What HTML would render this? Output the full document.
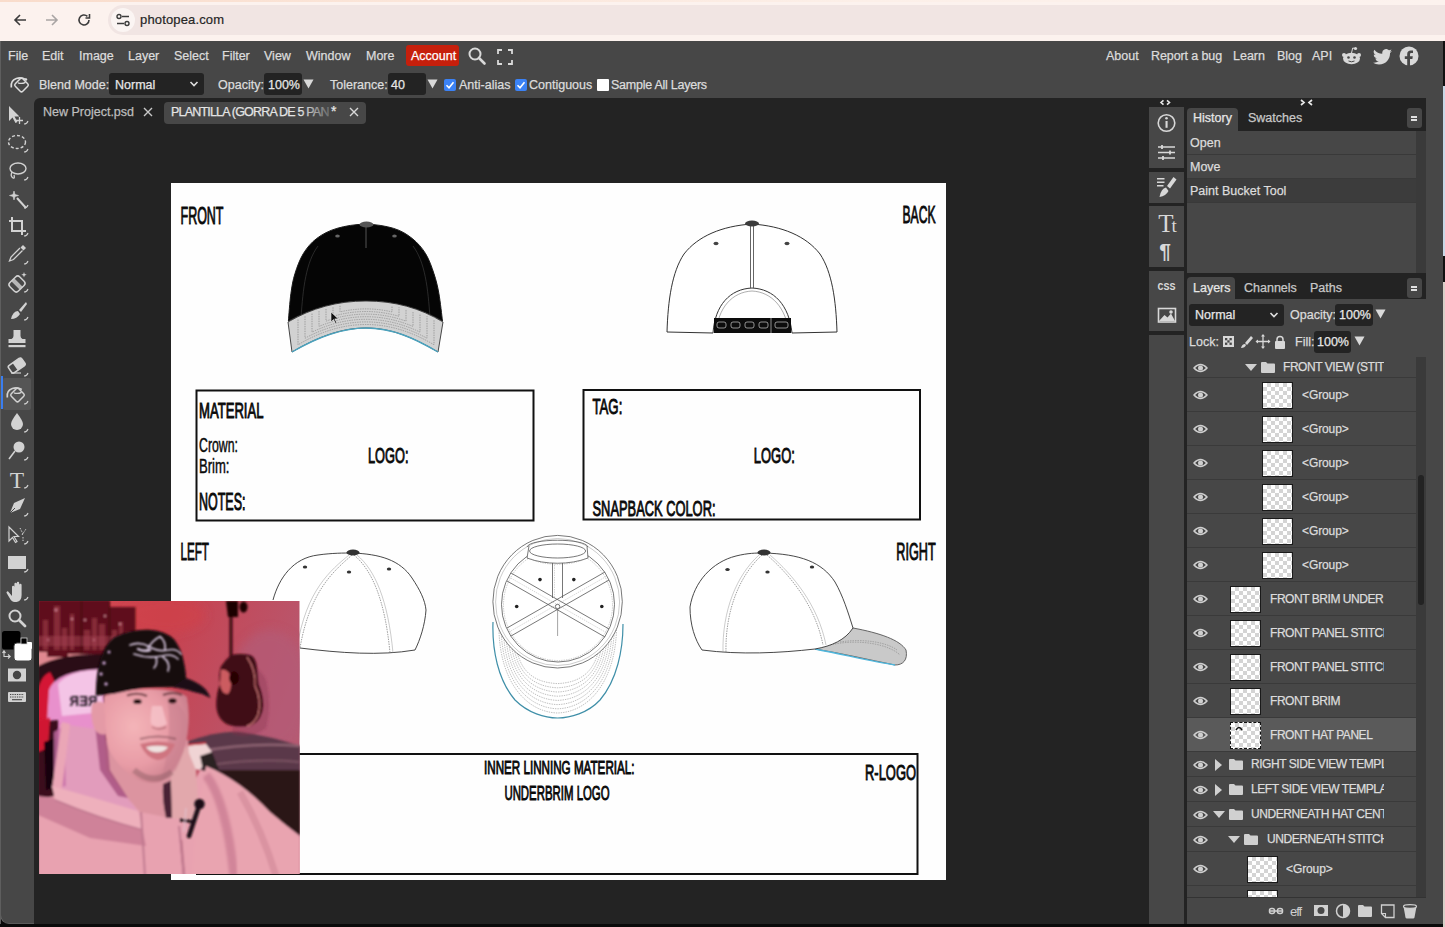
<!DOCTYPE html>
<html><head><meta charset="utf-8">
<style>
*{margin:0;padding:0;box-sizing:border-box}
html,body{width:1445px;height:927px;overflow:hidden;background:#0a0a0a;font-family:"Liberation Sans",sans-serif;}
.a{position:absolute}
.t{position:absolute;white-space:nowrap;color:#dcdcdc;font-size:12.5px;line-height:14px;-webkit-text-stroke:0.25px currentColor}
#chrome{left:0;top:0;width:1445px;height:41px;background:#fcf2ee}
#menubar{left:0;top:41px;width:1445px;height:29px;background:#474747}
#optbar{left:0;top:70px;width:1445px;height:28px;background:#474747}
#toolbar{left:0;top:98px;width:34px;height:826px;background:#474747;border-radius:0 0 0 9px;border-left:1px solid #6a6a6a;border-bottom:1px solid #5a5a5a}
#docarea{left:34px;top:98px;width:1114px;height:826px;background:#232323}
#rpanel{left:1148px;top:98px;width:295px;height:826px;background:#232323}
.sel{position:absolute;background:#232323;border-radius:3px}
.cb{position:absolute;width:12px;height:12px;border-radius:2px;background:#3b82f6}
.cbw{position:absolute;width:12px;height:12px;border-radius:1px;background:#fff}
</style></head><body>
<!-- browser chrome -->
<div id="chrome" class="a"></div>
<div class="a" style="left:0;top:0;width:1445px;height:2px;background:linear-gradient(90deg,#f9dccb,#fbe6da 30%,#fcefe8 60%,#fcf2ee)"></div>
<div class="a" style="left:108px;top:5px;width:1337px;height:30px;border-radius:15px 0 0 15px;background:#f1e5e3"></div>
<div class="a" style="left:111px;top:8px;width:24px;height:24px;border-radius:12px;background:#fbf5f3"></div>
<div class="t" style="left:140px;top:13px;color:#262626;font-size:13px;letter-spacing:.15px;-webkit-text-stroke:0.2px #262626">photopea.com</div>

<div id="menubar" class="a"></div>
<div id="optbar" class="a"></div>
<div id="toolbar" class="a"></div>
<div id="docarea" class="a"></div>
<div id="rpanel" class="a"></div>

<!-- browser nav icons -->
<svg class="a" style="left:12px;top:12px" width="16" height="16" viewBox="0 0 16 16"><path d="M14 8H3M8 3L3 8l5 5" fill="none" stroke="#3c3c3c" stroke-width="1.6"/></svg>
<svg class="a" style="left:44px;top:12px" width="16" height="16" viewBox="0 0 16 16"><path d="M2 8h11M8 3l5 5-5 5" fill="none" stroke="#a9a5a4" stroke-width="1.6"/></svg>
<svg class="a" style="left:76px;top:12px" width="16" height="16" viewBox="0 0 16 16"><path d="M13 8a5 5 0 1 1-1.6-3.7" fill="none" stroke="#3c3c3c" stroke-width="1.6"/><path d="M13.5 2v4h-4" fill="none" stroke="#3c3c3c" stroke-width="1.6"/></svg>
<svg class="a" style="left:115px;top:13px" width="16" height="14" viewBox="0 0 16 14"><circle cx="4" cy="3.5" r="2" fill="none" stroke="#3c3c3c" stroke-width="1.4"/><path d="M7 3.5h7M2 10.5h7" stroke="#3c3c3c" stroke-width="1.4"/><circle cx="12" cy="10.5" r="2" fill="none" stroke="#3c3c3c" stroke-width="1.4"/></svg>

<!-- menu -->
<div class="t" style="left:8px;top:49px">File</div>
<div class="t" style="left:42px;top:49px">Edit</div>
<div class="t" style="left:79px;top:49px">Image</div>
<div class="t" style="left:128px;top:49px">Layer</div>
<div class="t" style="left:174px;top:49px">Select</div>
<div class="t" style="left:222px;top:49px">Filter</div>
<div class="t" style="left:264px;top:49px">View</div>
<div class="t" style="left:306px;top:49px">Window</div>
<div class="t" style="left:366px;top:49px">More</div>
<div class="a" style="left:406px;top:45px;width:53px;height:21px;border-radius:3px;background:#c61f0c"></div>
<div class="t" style="left:411px;top:49px;color:#fff">Account</div>
<svg class="a" style="left:467px;top:46px" width="20" height="20" viewBox="0 0 20 20"><circle cx="8" cy="8" r="5.5" fill="none" stroke="#d9d9d9" stroke-width="2"/><path d="M12 12l5.5 5.5" stroke="#d9d9d9" stroke-width="2.6" stroke-linecap="round"/></svg>
<svg class="a" style="left:497px;top:49px" width="16" height="16" viewBox="0 0 16 16"><path d="M1 5V1h4M11 1h4v4M15 11v4h-4M5 15H1v-4" fill="none" stroke="#d9d9d9" stroke-width="1.8"/></svg>
<div class="t" style="left:1106px;top:49px">About</div>
<div class="t" style="left:1151px;top:49px;letter-spacing:-.1px">Report a bug</div>
<div class="t" style="left:1233px;top:49px">Learn</div>
<div class="t" style="left:1277px;top:49px">Blog</div>
<div class="t" style="left:1312px;top:49px">API</div>
<svg class="a" style="left:1341px;top:46px" width="21" height="20" viewBox="0 0 21 20"><ellipse cx="10.5" cy="12.5" rx="8.5" ry="5.8" fill="#d9d9d9"/><circle cx="3" cy="9" r="2" fill="#d9d9d9"/><circle cx="18" cy="9" r="2" fill="#d9d9d9"/><circle cx="14.5" cy="2.5" r="1.6" fill="#d9d9d9"/><path d="M10.5 7l1.2-5 3 .6" fill="none" stroke="#d9d9d9" stroke-width="1"/><circle cx="7.5" cy="11.5" r="1.3" fill="#474747"/><circle cx="13.5" cy="11.5" r="1.3" fill="#474747"/><path d="M7.5 15q3 1.6 6 0" fill="none" stroke="#474747" stroke-width="1"/></svg>
<svg class="a" style="left:1373px;top:49px" width="19" height="16" viewBox="0 0 24 20"><path d="M24 2.4a10 10 0 0 1-2.8.8A5 5 0 0 0 23.3.4a10 10 0 0 1-3.1 1.2A4.9 4.9 0 0 0 11.8 6 14 14 0 0 1 1.7.9a4.9 4.9 0 0 0 1.5 6.6A4.9 4.9 0 0 1 1 6.9a4.9 4.9 0 0 0 3.9 4.8 5 5 0 0 1-2.2.1 4.9 4.9 0 0 0 4.6 3.4A9.9 9.9 0 0 1 0 17.3 14 14 0 0 0 7.5 19.5c9.1 0 14-7.500 14-14v-.6A10 10 0 0 0 24 2.4z" fill="#d9d9d9"/></svg>
<svg class="a" style="left:1399px;top:46px" width="20" height="20" viewBox="0 0 20 20"><circle cx="10" cy="10" r="9.5" fill="#d9d9d9"/><path d="M11 20v-7h2.4l.4-2.8H11V8.5c0-.8.3-1.4 1.4-1.4H14V4.6a19 19 0 0 0-2.2-.1c-2.2 0-3.6 1.300-3.600 3.700v2H5.800V13h2.400v7z" fill="#474747"/></svg>

<!-- options bar -->
<svg class="a" style="left:0;top:70px" width="34" height="28" viewBox="0 70 34 28"><rect x="16.200" y="79.700" width="10.600" height="10.600" rx="1.800" transform="rotate(45 21.500 85)" fill="none" stroke="#dcdcdc" stroke-width="1.500"/><path d="M18 82.800q3.500 1.500 7.500-.5" fill="none" stroke="#dcdcdc" stroke-width="1.300"/><path d="M11.300 87.500q-1-7 5-9q5-1.500 9.500 1" fill="none" stroke="#dcdcdc" stroke-width="1.700"/><circle cx="26" cy="79.500" r="1.200" fill="#dcdcdc"/></svg>
<div class="t" style="left:39px;top:78px">Blend Mode:</div>
<div class="sel" style="left:109px;top:73px;width:95px;height:22px"></div>
<div class="t" style="left:115px;top:78px;color:#e6e6e6">Normal</div>
<svg class="a" style="left:189px;top:80px" width="10" height="8" viewBox="0 0 10 8"><path d="M1.5 2l3.5 3.5L8.5 2" fill="none" stroke="#ddd" stroke-width="1.6"/></svg>
<div class="t" style="left:218px;top:78px">Opacity:</div>
<div class="sel" style="left:264px;top:73px;width:38px;height:22px"></div>
<div class="t" style="left:268px;top:78px;color:#e6e6e6">100%</div>
<svg class="a" style="left:303px;top:79px" width="11" height="10" viewBox="0 0 11 10"><path d="M0.5 0.5h10L5.5 9.500z" fill="#d9d9d9"/></svg>
<div class="t" style="left:330px;top:78px">Tolerance:</div>
<div class="sel" style="left:388px;top:73px;width:38px;height:22px"></div>
<div class="t" style="left:391px;top:78px;color:#e6e6e6">40</div>
<svg class="a" style="left:427px;top:79px" width="11" height="10" viewBox="0 0 11 10"><path d="M0.5 0.5h10L5.5 9.500z" fill="#d9d9d9"/></svg>
<div class="cb" style="left:444px;top:79px"></div>
<svg class="a" style="left:444px;top:79px" width="12" height="12" viewBox="0 0 12 12"><path d="M2.5 6.200l2.500 2.500L9.500 3.200" fill="none" stroke="#fff" stroke-width="1.6"/></svg>
<div class="t" style="left:459px;top:78px">Anti-alias</div>
<div class="cb" style="left:515px;top:79px"></div>
<svg class="a" style="left:515px;top:79px" width="12" height="12" viewBox="0 0 12 12"><path d="M2.5 6.200l2.500 2.500L9.500 3.200" fill="none" stroke="#fff" stroke-width="1.6"/></svg>
<div class="t" style="left:529px;top:78px">Contiguous</div>
<div class="cbw" style="left:597px;top:79px"></div>
<div class="t" style="left:611px;top:78px;letter-spacing:-.25px">Sample All Layers</div>


<!-- left toolbar -->
<div class="a" style="left:34px;top:98px;width:8px;height:8px;background:#474747"></div>
<div class="a" style="left:34px;top:98px;width:8px;height:8px;background:#232323;border-radius:6px 0 0 0"></div>
<div class="a" style="left:3px;top:378px;width:28px;height:32px;background:#555555;border-radius:2px"></div>
<div class="a" style="left:0;top:376px;width:3px;height:33px;background:#3a7ef0"></div>
<svg class="a" style="left:0;top:98px" width="34" height="620" viewBox="0 98 34 620">
<g fill="#d2d2d2" stroke="#d2d2d2">
<!-- corner marks -->
<g fill="none" stroke-width="1.1" stroke="#cfcfcf">
<path d="M24 124q3 0 4-3"/><path d="M24 152q3 0 4-3"/><path d="M24 180q3 0 4-3"/><path d="M24 208q3 0 4-3"/><path d="M24 236q3 0 4-3"/><path d="M24 264q3 0 4-3"/><path d="M24 292q3 0 4-3"/><path d="M24 320q3 0 4-3"/><path d="M24 376q3 0 4-3"/><path d="M24 404q3 0 4-3"/><path d="M24 432q3 0 4-3"/><path d="M24 460q3 0 4-3"/><path d="M24 488q3 0 4-3"/><path d="M24 516q3 0 4-3"/><path d="M24 544q3 0 4-3"/><path d="M24 572q3 0 4-3"/><path d="M24 600q3 0 4-3"/>
</g>
<!-- move -->
<path d="M9 106l0 15 3.5-3.5 3 5.500 2-1-3-5.500 5 0z" stroke="none"/>
<path d="M19.5 117v7M16 120.5h7" fill="none" stroke-width="1.3"/>
<!-- ellipse marquee -->
<ellipse cx="17" cy="142" rx="8.5" ry="6.5" fill="none" stroke-width="1.4" stroke-dasharray="3 2"/>
<!-- lasso -->
<ellipse cx="18" cy="168.5" rx="8" ry="5.5" fill="none" stroke-width="1.4"/>
<path d="M12 172q-2 4 1 6q2 1 1-3" fill="none" stroke-width="1.3"/>
<!-- wand -->
<path d="M17 198l9 10" fill="none" stroke-width="2"/>
<path d="M14 191l1 3.500 3.500 1-3.500 1-1 3.500-1-3.500-3.500-1 3.500-1z" stroke-width=".6"/>
<!-- crop -->
<path d="M12 217v14h14M9 221h13v14" fill="none" stroke-width="2"/>
<!-- eyedropper -->
<path d="M23 245l3 3-2.500 2.500-3-3z" stroke="none"/>
<path d="M20 248l-9 9-1.500 4 4-1.500 9-9" fill="none" stroke-width="1.3"/>
<!-- heal -->
<g transform="rotate(45 17 284)"><rect x="11" y="277" width="12" height="14" rx="3" fill="none" stroke-width="1.5"/><rect x="11" y="282" width="12" height="4" stroke="none" opacity=".8"/></g>
<path d="M24 272l.7 2 2 .7-2 .7-.7 2-.7-2-2-.7 2-.7z" stroke="none"/>
<!-- brush -->
<path d="M26 302l-7 8 2 2 6-8z" stroke="none"/><path d="M18 311q-5 0-7 8q6 0 9-5z" stroke="none"/>
<!-- stamp -->
<path d="M13.500 330h7v6q0 2 2 3h3v4H8.500v-4h3q2-1 2-3z" stroke="none"/><rect x="8.500" y="345" width="17" height="2.200" stroke="none"/>
<!-- eraser -->
<g transform="rotate(-35 17 366)"><rect x="9" y="361" width="16" height="9" rx="2" fill="none" stroke-width="1.6"/><rect x="15" y="361" width="10" height="9" rx="1" stroke="none"/></g>
<path d="M11 373h10" fill="none" stroke-width="1.2"/>
<!-- bucket -->
<g fill="none"><rect x="12.200" y="389.700" width="10.600" height="10.600" rx="1.800" transform="rotate(45 17.500 395)" stroke-width="1.500"/><path d="M14 392.800q3.500 1.500 7.500-.5" stroke-width="1.300"/><path d="M7.300 397.500q-1-7 5-9q5-1.500 9.500 1" stroke-width="1.700"/></g>
<!-- drop -->
<path d="M17 413q-6 8-6 11a6 6 0 0 0 12 0q0-3-6-11z" stroke="none"/>
<!-- dodge -->
<circle cx="19" cy="447" r="5.5" stroke="none"/><path d="M15 451l-6 8" fill="none" stroke-width="1.5"/>
</g>
<text x="17" y="487.5" text-anchor="middle" font-family="Liberation Serif" font-size="23.5" fill="#d2d2d2">T</text>
<g fill="#d2d2d2" stroke="#d2d2d2">
<!-- pen -->
<path d="M25 498l-11 5-4 10 10-4 5-11z" stroke="none"/><path d="M10 513l5-5" stroke="#474747" stroke-width="1"/>
<!-- path select -->
<path d="M9 527v14l3.500-3.500 3 5 1.500-1-3-5h4.500z" fill="none" stroke-width="1.2"/>
<path d="M20 528l3 6M22 535l4-6M23 537v4" fill="none" stroke-width="1" stroke-dasharray="1.500 1.200"/>
<!-- rect -->
<rect x="8" y="556" width="18" height="13" stroke="none"/>
<!-- hand -->
<path d="M12 596v-9a1.200 1.200 0 0 1 2.400 0v5v-8a1.200 1.200 0 0 1 2.400 0v8v-9a1.200 1.200 0 0 1 2.400 0v9v-7a1.200 1.200 0 0 1 2.400 0v10q0 6-5 7h-2q-3 0-5-4l-3-5a1.100 1.100 0 0 1 2-1z" stroke="none"/>
<!-- zoom -->
<circle cx="15" cy="616" r="5.5" fill="none" stroke-width="2"/><path d="M19 620l6 6" fill="none" stroke-width="2.8" stroke-linecap="round"/>
</g>
<!-- colors -->
<rect x="2" y="631" width="18.500" height="18.500" rx="2.500" fill="#000"/>
<rect x="14" y="643" width="18" height="18" rx="3" fill="#fff" stroke="#474747" stroke-width="1"/>
<rect x="25" y="642" width="7" height="7" rx="1" fill="#fff"/>
<rect x="21" y="638" width="6" height="6" fill="#000" stroke="#d2d2d2" stroke-width=".8"/>
<path d="M4 651v5.500h6M8 654.500l2.200 2-2.200 2M2.500 653l1.500-2.200 1.500 2.200" fill="none" stroke="#d2d2d2" stroke-width="1.100"/>
<!-- quick mask -->
<rect x="8" y="668.500" width="18" height="13" fill="#d2d2d2"/><circle cx="17" cy="675" r="4.200" fill="#474747"/>
<!-- keyboard -->
<rect x="8" y="692" width="18" height="10" rx="1" fill="#d2d2d2"/>
<path d="M10 694.500h14M10 697h14" stroke="#474747" stroke-width="1.100" stroke-dasharray="1.300 1"/><path d="M12 699.700h10" stroke="#474747" stroke-width="1.100"/>
</svg>


<!-- document -->
<svg class="a" style="left:0;top:0" width="1445" height="927" viewBox="0 0 1445 927">
<defs>
<filter id="soft" x="-5%" y="-5%" width="110%" height="110%"><feGaussianBlur stdDeviation="0.35"/></filter>
</defs>
<rect x="171" y="183" width="775" height="697" fill="#fefefe"/>
<g font-family="Liberation Sans" font-weight="normal" fill="#0a0a0a" stroke="#0a0a0a" stroke-width="0.95">
<text x="180.5" y="223.5" font-size="24.2" textLength="43" lengthAdjust="spacingAndGlyphs">FRONT</text>
<text x="902.5" y="223.2" font-size="24.2" textLength="33" lengthAdjust="spacingAndGlyphs">BACK</text>
<text x="199" y="418" font-size="22" textLength="64.5" lengthAdjust="spacingAndGlyphs">MATERIAL</text>
<text x="199" y="452" font-size="19.5" font-weight="normal" stroke-width="0.45" textLength="39" lengthAdjust="spacingAndGlyphs">Crown:</text>
<text x="199" y="473.3" font-size="19.5" font-weight="normal" stroke-width="0.45" textLength="30.5" lengthAdjust="spacingAndGlyphs">Brim:</text>
<text x="368" y="463" font-size="22" textLength="40.5" lengthAdjust="spacingAndGlyphs">LOGO:</text>
<text x="199" y="509.5" font-size="23" textLength="46.5" lengthAdjust="spacingAndGlyphs">NOTES:</text>
<text x="592.5" y="413.8" font-size="22.5" textLength="29.8" lengthAdjust="spacingAndGlyphs">TAG:</text>
<text x="753.8" y="463" font-size="22" textLength="41" lengthAdjust="spacingAndGlyphs">LOGO:</text>
<text x="592.5" y="515.6" font-size="22" textLength="123" lengthAdjust="spacingAndGlyphs">SNAPBACK COLOR:</text>
<text x="180.5" y="559.6" font-size="23.5" textLength="28.5" lengthAdjust="spacingAndGlyphs">LEFT</text>
<text x="896.3" y="559.6" font-size="23.5" textLength="39.3" lengthAdjust="spacingAndGlyphs">RIGHT</text>
<text x="484" y="774.3" font-size="19" textLength="150.5" lengthAdjust="spacingAndGlyphs">INNER LINNING MATERIAL:</text>
<text x="504.4" y="800.3" font-size="20" textLength="105.2" lengthAdjust="spacingAndGlyphs">UNDERBRIM LOGO</text>
<text x="865" y="779.8" font-size="22" textLength="51" lengthAdjust="spacingAndGlyphs">R-LOGO</text>
</g>
<g fill="none" stroke="#111" stroke-width="2">
<rect x="196.5" y="390.5" width="337" height="130"/>
<rect x="583.5" y="390" width="336.5" height="129.5"/>
<rect x="197" y="754" width="720.5" height="120"/>
</g>

<!-- FRONT hat -->
<g>
<path d="M288.4 321.0 C288.8 316.4 289.8 301.5 290.9 293.6 C292.0 285.7 292.9 280.2 295.0 273.5 C297.1 266.8 299.8 259.4 303.4 253.5 C307.0 247.7 311.2 242.6 316.8 238.4 C322.4 234.2 328.8 230.8 336.9 228.4 C345.0 226.0 355.8 224.2 365.3 224.2 C374.8 224.2 385.9 226.0 393.7 228.4 C401.5 230.8 406.8 234.2 412.1 238.4 C417.4 242.6 421.9 247.7 425.5 253.5 C429.1 259.4 431.7 266.8 433.9 273.5 C436.1 280.2 437.5 285.7 438.9 293.6 C440.3 301.5 441.9 316.4 442.5 321.0 C420 308 395 301 366 301 C337 301 312 308 288.4 321Z" fill="#050505" stroke="#1a1a1a" stroke-width="1"/>
<path d="M301 318 C303 288 306 262 318 246" fill="none" stroke="#3a3a3a" stroke-width=".7"/>
<path d="M430 318 C428 288 425 262 413 246" fill="none" stroke="#3a3a3a" stroke-width=".7"/>
<path d="M366 227 V248" stroke="#555" stroke-width="1"/>
<ellipse cx="366.5" cy="224.5" rx="7" ry="3" fill="#555"/>
<ellipse cx="337.5" cy="236" rx="2.3" ry="1.6" fill="#666"/>
<ellipse cx="394.5" cy="236" rx="2.3" ry="1.6" fill="#666"/>
<path d="M288 322 C312 308 337 301 366 301 C395 301 420 308 443 322 L438 352 C414 338 392 328 366 328 C340 328 316 338 292 352Z" fill="#d2d2d2" stroke="#333" stroke-width=".9"/>
<path d="M292 352 C316 338 340 328 366 328 C392 328 414 338 438 352" fill="none" stroke="#4aa3bf" stroke-width="1.4"/>
<g fill="none" stroke="#7a7a7a" stroke-width=".6" stroke-dasharray="1.4 1"><path d="M298 319.5 L298 344.8 Q366 304.2 434 344.8 L434 319.5"/><path d="M305 316.3 L305 338.2 Q366 305.6 427 338.2 L427 316.3"/><path d="M312 313.6 L312 332.1 Q366 306.5 420 332.1 L420 313.6"/><path d="M319 311.1 L319 326.4 Q366 307.0 413 326.4 L413 311.1"/><path d="M326 309.0 L326 321.1 Q366 307.1 406 321.1 L406 309.0"/><path d="M333 307.3 L333 316.3 Q366 306.7 399 316.3 L399 307.3"/><path d="M340 305.8 L340 311.9 Q366 305.9 392 311.9 L392 305.8"/></g>
<path d="M331 312 v10 l2.5-2.5 l2 4 l1.3-.6 l-2-4 h3.5z" fill="#111" stroke="#eee" stroke-width=".6"/>
</g>
<!-- BACK hat -->
<g fill="none" stroke="#333" stroke-width="1">
<path d="M667 332 C668 300 672 272 684 254 C698 236 722 226 752 224 C782 226 806 236 820 254 C832 272 836 300 837 332" fill="#fff"/>
<path d="M667 332 L713 333 M792 333 L837 332"/>
<path d="M713 333 C715 305 730 289 752 288 C774 289 789 305 792 333" stroke-width="1"/>
<path d="M716 333 C718 308 732 292 752 291 C772 292 786 308 789 333" stroke="#777" stroke-width=".6"/>
<path d="M750.5 226 V288 M753.5 226 V288" stroke="#555" stroke-width=".9"/>
</g>
<rect x="714" y="318" width="77" height="15" fill="#0c0c0c"/>
<g fill="none" stroke="#ccc" stroke-width=".7"><rect x="717" y="322" width="9" height="6" rx="2"/><rect x="731" y="322" width="9" height="6" rx="2"/><rect x="745" y="322" width="9" height="6" rx="2"/><rect x="759" y="322" width="9" height="6" rx="2"/><rect x="775" y="322" width="13" height="6" rx="2"/><path d="M771 318 v15"/></g>
<ellipse cx="752" cy="223.5" rx="7" ry="3" fill="#3c3c3c"/>
<ellipse cx="716" cy="243.5" rx="2.5" ry="1.7" fill="#444"/>
<ellipse cx="787" cy="243.5" rx="2.5" ry="1.7" fill="#444"/>
<!-- LEFT hat -->
<g fill="none" stroke="#333" stroke-width=".9">
<path d="M273 600 C279 578 293 558 318 555 C332 553 344 553 352 553 C380 554 400 560 412 578 C420 590 425 600 426 610 C425 625 420 640 415 650 C380 656 340 653 300 648"  fill="#fff"/>
<path d="M352 555 C335 570 310 590 300 648" stroke="#777" stroke-width=".7" stroke-dasharray="1.5 1"/>
<path d="M349 555 C331 570 306 590 297 648" stroke="#999" stroke-width=".5"/>
<path d="M354 555 C372 570 385 600 390 653" stroke="#777" stroke-width=".7" stroke-dasharray="1.5 1"/>
<path d="M357 555 C375 570 388 600 393 653" stroke="#999" stroke-width=".5"/>
</g>
<ellipse cx="353" cy="552.5" rx="6.5" ry="3" fill="#333"/>
<ellipse cx="305" cy="567" rx="2.2" ry="1.6" fill="#333"/>
<ellipse cx="349" cy="572" rx="2.2" ry="1.6" fill="#333"/>
<ellipse cx="389" cy="569" rx="2.2" ry="1.6" fill="#333"/>
<!-- UNDERNEATH hat -->
<path d="M493 622 C492 650 498 680 515 700 C528 713 545 718 557.6 718 C570 718 588 713 600 700 C617 680 623 650 623 624" fill="#fff" stroke="#3f8fa8" stroke-width="1.2"/>
<g fill="none" stroke="#8a8a8a" stroke-width=".55" stroke-dasharray="1.4 1"><path d="M499.0 630.0 C500.0 680.0 525.0 712.0 557.6 713.0 C590.0 712.0 615.0 680.0 616.5 630.0"/>
<path d="M501.3 631.3 C502.5 679.2 526.7 707.8 557.6 708.8 C588.3 707.8 612.5 679.2 614.2 631.3"/>
<path d="M503.6 632.5 C505.0 678.3 528.4 703.6 557.6 704.6 C586.6 703.6 610.0 678.3 611.9 632.5"/>
<path d="M505.9 633.8 C507.6 677.5 530.0 699.4 557.6 700.4 C585.0 699.4 607.4 677.5 609.6 633.8"/>
<path d="M508.2 635.0 C510.1 676.6 531.7 695.2 557.6 696.2 C583.3 695.2 604.9 676.6 607.3 635.0"/>
<path d="M510.6 636.3 C512.6 675.8 533.4 691.0 557.6 692.0 C581.6 691.0 602.4 675.8 605.0 636.3"/>
<path d="M512.9 637.6 C515.1 675.0 535.1 686.8 557.6 687.8 C579.9 686.8 599.9 675.0 602.6 637.6"/>
<path d="M515.2 638.8 C517.6 674.1 536.8 682.6 557.6 683.6 C578.2 682.6 597.4 674.1 600.3 638.8"/></g>
<g fill="none" stroke="#555" stroke-width=".8">
<ellipse cx="557.6" cy="601.7" rx="64.7" ry="66.3" fill="#fff"/>
<ellipse cx="557.6" cy="602" rx="62" ry="63.5" stroke="#999" stroke-width=".5"/>
<ellipse cx="558" cy="604.5" rx="56.5" ry="57.5"/>
<ellipse cx="558" cy="605" rx="54.5" ry="55.5" stroke="#999" stroke-width=".5" stroke-dasharray="1.4 1"/>
<path d="M527 547 C530 538 585 538 588 547" fill="none"/>
<path d="M529 546 L527 558 C545 565 570 565 588 558 L587 546" fill="#fff"/>
<ellipse cx="557.6" cy="551" rx="28" ry="7" fill="#fff"/>
<path d="M531 559 C545 566 570 566 585 559" stroke="#999" stroke-width=".5" stroke-dasharray="1.4 1"/>
<path d="M552.5 563 V598 M562.5 563 V598" />
<path d="M554.5 565 V598" stroke="#aaa" stroke-width=".5" stroke-dasharray="1.4 1"/>
<path d="M511 573 L609 629 M507 581 L605 637" fill="none"/>
<path d="M509 577 L607 633" stroke="#aaa" stroke-width=".5" stroke-dasharray="1.4 1"/>
<path d="M507 628 L605 572 M511 636 L609 580" fill="none"/>
<path d="M509 632 L607 576" stroke="#aaa" stroke-width=".5" stroke-dasharray="1.4 1"/>
<path d="M557.6 608 L557.6 636" stroke="#666" stroke-width=".6"/>
<circle cx="557.6" cy="606.5" r="2.2" fill="#fff"/>
</g>
<circle cx="540" cy="579.6" r="1.8" fill="#222"/><circle cx="573.8" cy="579.6" r="1.8" fill="#222"/>
<circle cx="516.7" cy="606.5" r="1.8" fill="#222"/><circle cx="601.8" cy="606.5" r="1.8" fill="#222"/>
<!-- RIGHT hat -->
<g fill="none" stroke="#333" stroke-width=".9">
<path d="M853 628 C880 633 900 640 906 650 C908 660 903 665 895 665 C870 660 840 653 815 649Z" fill="#c9c9c9" stroke="#555"/>
<path d="M815 649 C850 656 875 662 895 665" stroke="#4fb6dc" stroke-width="1.4"/>
<g stroke="#888" stroke-width=".6" stroke-dasharray="1.5 1"><path d="M830 645 C860 638 890 645 900 655"/><path d="M840 642 C865 638 888 643 897 650"/></g>
<path d="M690 607 C694 582 712 562 736 556 C748 553 756 553 764 553 C800 554 822 562 835 582 C843 596 848 612 853 628 C845 640 832 646 815 649 C780 653 740 655 702 650 C695 640 690 625 690 607Z" fill="#fff"/>
<path d="M762 555 C740 575 725 610 726 653" stroke="#777" stroke-width=".7" stroke-dasharray="1.5 1"/>
<path d="M759 555 C737 575 722 610 723 653" stroke="#999" stroke-width=".5"/>
<path d="M767 555 C790 575 815 605 823 645" stroke="#777" stroke-width=".7" stroke-dasharray="1.5 1"/>
<path d="M770 555 C793 575 818 605 826 645" stroke="#999" stroke-width=".5"/>
</g>
<ellipse cx="764" cy="552.5" rx="6.5" ry="3" fill="#333"/>
<ellipse cx="727.5" cy="569.5" rx="2.2" ry="1.6" fill="#333"/>
<ellipse cx="767.5" cy="572" rx="2.2" ry="1.6" fill="#333"/>
<ellipse cx="812" cy="567" rx="2.2" ry="1.6" fill="#333"/>

</svg>

<!-- webcam -->
<svg class="a" style="left:0;top:0" width="1445" height="927" viewBox="0 0 1445 927">
<defs>
<clipPath id="camclip"><rect x="39" y="601" width="260.5" height="273"/></clipPath>
<filter id="b1" x="-10%" y="-10%" width="120%" height="120%"><feGaussianBlur stdDeviation="1"/></filter>
<filter id="b2" x="-10%" y="-10%" width="120%" height="120%"><feGaussianBlur stdDeviation="1.3"/></filter>
<filter id="b4" x="-30%" y="-30%" width="160%" height="160%"><feGaussianBlur stdDeviation="5"/></filter>
<linearGradient id="wallg" x1="0" y1="0" x2="1" y2="0.4"><stop offset="0" stop-color="#d84a52"/><stop offset=".45" stop-color="#c8424f"/><stop offset="1" stop-color="#b65a72"/></linearGradient>
<radialGradient id="faceg" cx=".35" cy=".4" r=".75"><stop offset="0" stop-color="#f4b4b8"/><stop offset=".55" stop-color="#e89ca6"/><stop offset="1" stop-color="#c47a88"/></radialGradient>
<linearGradient id="hoodg" x1="0" y1="0" x2="0.6" y2="1"><stop offset="0" stop-color="#e49aac"/><stop offset="1" stop-color="#eaa6b0"/></linearGradient>
</defs>

<g clip-path="url(#camclip)">
<rect x="38" y="600" width="263" height="276" fill="url(#wallg)"/>
<g filter="url(#b4)">
<ellipse cx="270" cy="690" rx="40" ry="60" fill="#b45c78" opacity=".7"/>
<ellipse cx="165" cy="615" rx="40" ry="18" fill="#d04048" opacity=".6"/>
</g>
<g filter="url(#b2)">
<!-- poster -->
<path d="M38 600 H109.500 V607 H135.500 V649 H109.500 V654 H68 V657 H47 V652 H38Z" fill="#5e0f1b"/>
<g fill="#a84050" opacity=".55">
<rect x="43" y="620" width="5" height="30"/><rect x="54" y="606" width="6" height="44"/><rect x="62" y="628" width="5" height="22"/><rect x="70" y="614" width="4" height="36"/>
<rect x="84" y="630" width="6" height="20"/><rect x="92" y="618" width="5" height="32"/><rect x="99" y="624" width="6" height="26"/>
<rect x="112" y="630" width="5" height="18"/><rect x="119" y="622" width="4" height="26"/><rect x="126" y="632" width="6" height="16"/>
</g>
<g fill="#e8a0b0" opacity=".7"><circle cx="56" cy="610" r="1.500"/><circle cx="72" cy="619" r="1.200"/><circle cx="85" cy="620" r="1.300"/><circle cx="105" cy="616" r="1.200"/><circle cx="120" cy="624" r="1.200"/><circle cx="48" cy="640" r="1.400"/><circle cx="94" cy="640" r="1.300"/></g>
<rect x="38" y="636" width="97" height="10" fill="#a04050" opacity=".55"/>
<path d="M81.500 601 V654 M109.500 601 V654" stroke="#3a0610" stroke-width="1"/>
<!-- wall band -->
<path d="M38 652 H47 V657 H68 V654 H104 V668 H38Z" fill="#e08890"/>
<!-- chair -->
<path d="M38 666 Q62 653 104 654 L106 700 L106 876 H38Z" fill="#2c0c14"/>
<path d="M38 690 Q41 676 50 672 L54 680 L48 790 L38 800Z" fill="#d41634"/>
<path d="M49 690 Q56 671 100 669 L104 700 L104 770 L60 790 L48 795 Q45 740 49 690Z" fill="#e890cc"/>
<path d="M58 684 Q70 670 100 670 L103 712 L62 716Z" fill="#f4c4e6"/>
<path d="M48 730 L60 722 L62 760 L48 770Z" fill="#d060b0" opacity=".8"/>
</g>
<g filter="url(#b1)">
<text x="0" y="0" font-family="Liberation Sans" font-weight="bold" font-size="14" fill="#231420" transform="translate(97.5 705.5) scale(-1 1)" textLength="28" lengthAdjust="spacingAndGlyphs">RER</text>
</g>
<g filter="url(#b2)">
<!-- blanket and dark bottom right -->
<path d="M186 742 Q220 730 240 732 Q270 736 300 746 V772 L220 776 L200 770Z" fill="#5a3848"/>
<path d="M198 752 Q250 742 299 746" stroke="#8a6070" stroke-width="2.5" fill="none"/>
<path d="M210 765 Q260 758 299 762" stroke="#7a5262" stroke-width="2" fill="none"/>
<path d="M214 770 H300 V876 H240Z" fill="#2a1416"/>
<!-- chair piece right -->
<path d="M184 746 L206 744 L212 752 L200 770 L186 768Z" fill="#f0d4d4"/>
<path d="M186 745 L206 743" stroke="#e03040" stroke-width="1.500"/>
<path d="M200 756 L212 752 L220 772 L204 774Z" fill="#2a2024"/>
<!-- guitar -->
<path d="M236 668 Q256 660 266 680 Q272 705 266 728 Q250 740 232 734Z" fill="#8a3050" opacity=".35"/>
<path d="M231 601 V658" stroke="#3a0a10" stroke-width="3"/>
<path d="M226 601 H238 V617 H228Z" fill="#1c0406"/>
<ellipse cx="243.500" cy="607" rx="4" ry="5.500" fill="#1c0406"/>
<path d="M231 655 Q240 653 250 655 Q256 657 257 668 Q258 680 258.600 684.600 Q263 694 263.200 705.700 Q262 720 252 725 Q240 728 229 725 Q217 720 216.300 705.700 Q216 694 220 684 Q218 676 220.900 666.500 Q225 660 231 655Z" fill="#400912"/>
<path d="M247 657 Q256 670 255 686 Q262 700 258 715 Q254 724 247 726" stroke="#d88080" stroke-width="1.100" fill="none"/>
<path d="M221 670 Q226 668 231 676 Q232 690 228 694 Q221 694 220 684Z" fill="#cc5c60"/>
<ellipse cx="234" cy="678" rx="5" ry="6.500" fill="#260406"/>
<!-- hoodie base -->
<path d="M38 790 L60 788 L150 805 L186 800 L200 770 Q225 775 250 800 Q280 820 300 836 V876 H38Z" fill="#e8a2b0"/>
<!-- chair dark lower left -->
<path d="M38 722 L58 720 L58 795 L38 800Z" fill="#3a0c1c"/>
<path d="M38 720 L50 718 L48 748 L38 752Z" fill="#d01832"/>
<path d="M44 742 L56 738 L57 787 L46 790Z" fill="#140408"/>
<!-- neck -->
<path d="M100 740 L188 740 L190 790 L170 818 L140 812 L104 772Z" fill="#dc94a0"/>
<path d="M163 784 L172 780 L173 818 L166 818 Q162 800 163 784Z" fill="#4a2434"/>
<!-- hood interior left -->
<path d="M60 724 L104 730 L106 770 L128 798 L140 814 L54 788Z" fill="#e29cbc"/>
<path d="M94 716 L106 724 L110 770 L128 798 L118 796 L100 770Z" fill="#a04878" opacity=".75"/>
<path d="M54 732 L64 726 L66 786 L54 788Z" fill="#c870a8" opacity=".8"/>
<!-- hood outer rim -->
<path d="M62 722 L70 724 L62 788 L52 788Z" fill="#eaa6b6"/>
<!-- shadow below fold -->
<path d="M38 796 L55 798 L142 828 L146 846 L90 838 L38 815Z" fill="#cf8299"/>
<!-- hood front fold band -->
<path d="M52 786 Q95 798 138 811 L143 830 Q98 818 55 800Z" fill="#eeb0bc"/>
<path d="M55 800 Q98 818 143 830" stroke="#c07890" stroke-width="1.5" fill="none"/>
<!-- right hood -->
<path d="M170 752 L186 746 L196 770 L200 822 L172 818Z" fill="#e2a8ac"/>
<!-- right shoulder -->
<path d="M206 766 Q240 780 270 812 Q290 828 300 840 V876 H192 L196 822Z" fill="#e9a4b0"/>
<path d="M206 775 Q226 800 234 876" stroke="#c87890" stroke-width="9" fill="none" opacity=".7" filter="url(#b2)"/>
<path d="M240 792 Q262 830 276 876" stroke="#d08898" stroke-width="7" fill="none" opacity=".6"/>
<path d="M181 840 L184 876" stroke="#b86a80" stroke-width="2.500" fill="none"/>
<path d="M141 812 L145 876 M179 826 L184 876" stroke="#c07a90" stroke-width="2" fill="none"/>
<!-- face -->
<path d="M104 696 Q120 690 150 689 Q178 689 187 697 Q190 715 188 730 Q186 748 181 757 Q172 776 160 782 Q148 785 136 779 Q118 768 108 748 Q103 725 104 696Z" fill="url(#faceg)"/>
<path d="M168 700 Q188 705 188 730 Q185 752 176 770 Q168 778 160 782 Q172 745 168 700Z" fill="#c97f8e" opacity=".55"/>
<path d="M92 704 Q98 700 104 703 L106 734 Q98 736 94 728 Q90 716 92 704Z" fill="#e49aa6"/>
<path d="M127 695.500 Q137 692 147 696" stroke="#6a3a40" stroke-width="2" fill="none"/>
<path d="M163 695 Q173 691 182 695" stroke="#6a3a40" stroke-width="2" fill="none"/>
<ellipse cx="137.500" cy="701.500" rx="4.200" ry="2.600" fill="#241010"/>
<ellipse cx="172.500" cy="700.800" rx="4.200" ry="2.600" fill="#241010"/>
<path d="M152 706 Q150 718 151 724 Q158 730 167 724 Q164 714 162 706Z" fill="#f6c4ca" opacity=".8"/>
<path d="M152 727 Q158 731 166 727" stroke="#a05a64" stroke-width="1.500" fill="none" opacity=".7"/>
<path d="M140 739 Q158 734 176 739" stroke="#7a4850" stroke-width="2.200" fill="none" opacity=".6"/>
<path d="M140 744 Q158 739 175 744 Q168 760 157 760 Q146 758 140 744Z" fill="#cf7480"/>
<path d="M146 747 Q158 744.500 168 747 Q165 752 157 752.500 Q149 752 146 747Z" fill="#efe2e0"/>
<path d="M134 770 Q152 786 172 772" stroke="#8a5a62" stroke-width="6" fill="none" opacity=".45"/>
<!-- cap -->
<path d="M95.700 695.700 Q96 672 100.500 658.800 Q105 645 114 637.500 Q130 629 149 629.700 Q166 631 174.300 639.400 Q182 650 184 662.700 Q186 672 186 678.300 Q196 682 201.500 686 Q208 691 210.200 697.700 Q202 693 193.700 691.800 Q182 688 172.400 687 Q158 687 143.300 688 Q128 690 114 693.800 Q104 695 95.700 695.700Z" fill="#160810"/>
<path d="M186 678.300 Q196 682 201.500 686 Q208 691 210.200 697.700 Q202 693 193.700 691.800 Q182 688 172.400 687Z" fill="#1e0c16"/>
</g>
<g filter="url(#b1)" fill="none" stroke="#dccbe4" stroke-width="1.700" stroke-linecap="round">
<path d="M130 645 Q140 641 150 647 Q158 652 168 650 Q176 648 181 654"/>
<path d="M134 654 Q148 659 162 656 Q172 653 178 659"/>
<path d="M148 648 Q153 640 160 636.500 Q166 641 165 650"/>
<path d="M163 657 Q171 663 168 671"/>
<path d="M156 657 Q158 664 154 668"/>
<path d="M138 649 Q144 652 150 650" stroke-width="2.500"/>
</g>
<g filter="url(#b1)" fill="#c8a0d0"><circle cx="104" cy="663" r="1.8"/><circle cx="101" cy="674" r="1.8"/><circle cx="106" cy="684" r="1.8"/><circle cx="109" cy="652" r="1.6"/></g>
<g filter="url(#b1)">
<circle cx="199.500" cy="804" r="5.200" fill="#1a1014"/>
<path d="M198 809 L189 836" stroke="#1a1014" stroke-width="4.500" stroke-linecap="round"/>
<path d="M180 820 L195 822" stroke="#1a1014" stroke-width="3.200"/>
<path d="M186 808 L184 832" stroke="#e0c0cc" stroke-width="1.200"/>
</g>
</g>
</svg>
<!-- tabs -->
<div class="t" style="left:43px;top:105px;color:#bdbdbd">New Project.psd</div>
<svg class="a" style="left:143px;top:107px" width="10" height="10" viewBox="0 0 10 10"><path d="M1 1l8 8M9 1L1 9" stroke="#c8c8c8" stroke-width="1.4"/></svg>
<div class="a" style="left:164px;top:102px;width:202px;height:22px;border-radius:4px;background:#474747"></div>
<div class="t" style="left:171px;top:105px;color:#e4e4e4;width:158px;overflow:hidden;letter-spacing:-.8px">PLANTILLA (GORRA DE 5 PAN</div>
<div class="a" style="left:300px;top:103px;width:29px;height:20px;background:linear-gradient(90deg,rgba(71,71,71,0),rgba(71,71,71,.75))"></div>
<div class="t" style="left:331px;top:104px;color:#e6e6e6;font-size:14px">*</div>
<svg class="a" style="left:349px;top:107px" width="10" height="10" viewBox="0 0 10 10"><path d="M1 1l8 8M9 1L1 9" stroke="#d8d8d8" stroke-width="1.4"/></svg>

<div class="a" style="left:0;top:41px;width:1px;height:883px;background:#5e5e5e"></div>
<!-- right panel -->
<div class="a" style="left:1426px;top:98px;width:17px;height:826px;background:#474747"></div>
<div class="a" style="left:1443px;top:41px;width:2px;height:45px;background:#111"></div>
<div class="a" style="left:1443px;top:86px;width:2px;height:170px;background:#c8d8e6"></div>
<div class="a" style="left:1443px;top:256px;width:2px;height:26px;background:#111"></div>
<div class="a" style="left:1443px;top:282px;width:2px;height:645px;background:#d8d0c8"></div>
<div class="a" style="left:1149px;top:107px;width:35px;height:61px;background:#474747"></div>
<div class="a" style="left:1149px;top:172px;width:35px;height:31px;background:#474747"></div>
<div class="a" style="left:1149px;top:206px;width:35px;height:61px;background:#474747"></div>
<div class="a" style="left:1149px;top:271px;width:35px;height:60px;background:#474747"></div>
<div class="a" style="left:1149px;top:335px;width:35px;height:589px;background:#474747"></div>
<svg class="a" style="left:1148px;top:98px" width="40" height="240" viewBox="1148 98 40 240">
<path d="M1163.500 100.300l-2.500 2.200 2.500 2.200M1167 100.300l2.500 2.200-2.500 2.200" fill="none" stroke="#e8e8e8" stroke-width="1.600"/>
<circle cx="1166.500" cy="123" r="8.300" fill="none" stroke="#d8d8d8" stroke-width="1.600"/>
<rect x="1165.500" y="121" width="2.100" height="6.800" fill="#d8d8d8"/><circle cx="1166.500" cy="118.300" r="1.300" fill="#d8d8d8"/>
<g stroke="#d8d8d8" stroke-width="1.300"><path d="M1158 147h17M1158 152.500h17M1158 158h17"/><path d="M1162 145v4M1170 150.500v4M1163 156v4" stroke-width="1.800"/></g>
<g fill="#d8d8d8"><rect x="1157" y="178" width="7.500" height="1.500"/><rect x="1157" y="181.500" width="7.500" height="1.500"/><rect x="1157" y="185" width="6.500" height="1.500"/><path d="M1176.500 179.500l-3-2.500-6.500 9 3 2.500z"/><path d="M1166 187.500q-5 1-6.500 9.500q6.500-1 9-6z"/></g>
<text x="1166.500" y="231.500" text-anchor="middle" font-family="Liberation Serif" font-size="25" fill="#d8d8d8" letter-spacing="-2">T<tspan font-size="19">t</tspan></text>
<text x="1165" y="258" text-anchor="middle" font-family="Liberation Sans" font-weight="bold" font-size="21" fill="#d8d8d8">&#182;</text>
<text x="1166.500" y="290" text-anchor="middle" font-family="Liberation Mono" font-weight="bold" font-size="10" fill="#d8d8d8" textLength="18" lengthAdjust="spacingAndGlyphs">CSS</text>
<rect x="1158.500" y="308.500" width="17" height="13.500" fill="none" stroke="#d8d8d8" stroke-width="1.600"/><path d="M1159 321l5.500-6 3 2.500 3.500-4 4 7.500z" fill="#d8d8d8"/><circle cx="1171" cy="312" r="1.800" fill="#d8d8d8"/>
</svg>
<svg class="a" style="left:1296px;top:98px" width="20" height="10" viewBox="1296 98 20 10"><path d="M1301 100l3 2.500-3 2.500M1312 100l-3 2.500 3 2.500" fill="none" stroke="#e8e8e8" stroke-width="1.700"/></svg>
<!-- history panel -->
<div class="a" style="left:1187px;top:108px;width:51px;height:24px;background:#474747;border-radius:4px 4px 0 0"></div>
<div class="t" style="left:1193px;top:111px;color:#e6e6e6">History</div>
<div class="t" style="left:1248px;top:111px;color:#c8c8c8">Swatches</div>
<div class="a" style="left:1407px;top:108px;width:15px;height:20px;background:#474747;border-radius:3px"></div>
<div class="a" style="left:1411px;top:116px;width:6px;height:1.5px;background:#e0e0e0"></div><div class="a" style="left:1411px;top:119px;width:6px;height:1.5px;background:#e0e0e0"></div>
<div class="a" style="left:1187px;top:131px;width:239px;height:142px;background:#474747"></div>
<div class="a" style="left:1416px;top:131px;width:10px;height:142px;background:#3a3a3a"></div>
<div class="a" style="left:1187px;top:154px;width:229px;height:1px;background:#393939"></div>
<div class="a" style="left:1187px;top:178px;width:229px;height:1px;background:#393939"></div>
<div class="a" style="left:1187px;top:179px;width:229px;height:23px;background:#3c3c3c"></div>
<div class="a" style="left:1187px;top:202px;width:229px;height:1px;background:#393939"></div>
<div class="t" style="left:1190px;top:136px">Open</div>
<div class="t" style="left:1190px;top:160px">Move</div>
<div class="t" style="left:1190px;top:184px">Paint Bucket Tool</div>
<!-- layers panel -->
<div class="a" style="left:1187px;top:277px;width:48px;height:23px;background:#474747;border-radius:4px 4px 0 0"></div>
<div class="t" style="left:1193px;top:281px;color:#e6e6e6">Layers</div>
<div class="t" style="left:1244px;top:281px;color:#c8c8c8">Channels</div>
<div class="t" style="left:1310px;top:281px;color:#c8c8c8">Paths</div>
<div class="a" style="left:1407px;top:278px;width:15px;height:20px;background:#474747;border-radius:3px"></div>
<div class="a" style="left:1411px;top:286px;width:6px;height:1.5px;background:#e0e0e0"></div><div class="a" style="left:1411px;top:289px;width:6px;height:1.5px;background:#e0e0e0"></div>
<div class="a" style="left:1187px;top:299px;width:256px;height:625px;background:#474747"></div>
<div class="sel" style="left:1189px;top:304px;width:95px;height:22px"></div>
<div class="t" style="left:1195px;top:308px;color:#e6e6e6">Normal</div>
<svg class="a" style="left:1269px;top:311px" width="10" height="8" viewBox="0 0 10 8"><path d="M1.500 2l3.500 3.500L8.500 2" fill="none" stroke="#ddd" stroke-width="1.600"/></svg>
<div class="t" style="left:1290px;top:308px">Opacity:</div>
<div class="sel" style="left:1335px;top:304px;width:38px;height:22px"></div>
<div class="t" style="left:1339px;top:308px;color:#e6e6e6">100%</div>
<svg class="a" style="left:1375px;top:309px" width="11" height="10" viewBox="0 0 11 10"><path d="M.500 .500h10L5.500 9.500z" fill="#d9d9d9"/></svg>
<div class="t" style="left:1189px;top:335px">Lock:</div>
<svg class="a" style="left:1220px;top:333px" width="70" height="18" viewBox="1220 333 70 18">
<rect x="1223" y="336" width="11" height="11" fill="#d8d8d8"/><g fill="#474747"><rect x="1225" y="338" width="2.300" height="2.300"/><rect x="1229.500" y="338" width="2.300" height="2.300"/><rect x="1227.300" y="340.300" width="2.300" height="2.300"/><rect x="1225" y="342.600" width="2.300" height="2.300"/><rect x="1229.500" y="342.600" width="2.300" height="2.300"/></g>
<path d="M1251 336l-6 7 2 2 6-7z" fill="#d8d8d8"/><path d="M1245 344q-3 0-4 4q4 0 5-3z" fill="#d8d8d8"/>
<path d="M1263 335v13M1256.500 341.500h13" stroke="#d8d8d8" stroke-width="1.300"/><path d="M1263 334l-2 2.500h4zM1263 349l-2-2.500h4zM1255.500 341.500l2.500-2v4zM1270.500 341.500l-2.500-2v4z" fill="#d8d8d8"/>
<rect x="1275" y="341" width="10" height="8" rx="1" fill="#d8d8d8"/><path d="M1277 341.500v-2a3 3 0 0 1 6 0v2" fill="none" stroke="#d8d8d8" stroke-width="1.500"/>
</svg>
<div class="t" style="left:1295px;top:335px">Fill:</div>
<div class="sel" style="left:1314px;top:331px;width:37px;height:22px"></div>
<div class="t" style="left:1317px;top:335px;color:#e6e6e6">100%</div>
<svg class="a" style="left:1354px;top:336px" width="11" height="10" viewBox="0 0 11 10"><path d="M.500 .500h10L5.500 9.500z" fill="#d9d9d9"/></svg>
<!-- layer list -->
<div class="a" style="left:1187px;top:357px;width:239px;height:540px;background:#474747;overflow:hidden">
<div class="a" style="left:0;top:0px;width:229px;height:21px;background:#474747;border-bottom:1px solid #3a3a3a"></div>
<svg class="a" style="left:6px;top:4.5px" width="15" height="12" viewBox="0 0 15 12"><path d="M1 6q6.500-7 13 0q-6.500 7-13 0z" fill="none" stroke="#cfcfcf" stroke-width="1.500"/><circle cx="7.500" cy="6" r="2.500" fill="#cfcfcf"/></svg>
<svg class="a" style="left:58px;top:6.5px" width="12" height="8" viewBox="0 0 12 8"><path d="M0 0h12L6 7z" fill="#d0d0d0"/></svg>
<svg class="a" style="left:74px;top:5.0px" width="14" height="11" viewBox="0 0 14 11"><path d="M0 1q0-1 1-1h4l1.500 1.500H13q1 0 1 1V10q0 1-1 1H1q-1 0-1-1z" fill="#d0d0d0"/></svg>
<div class="t" style="left:96px;top:3.0px;width:101px;overflow:hidden;font-size:12px;letter-spacing:-.45px">FRONT VIEW (STIT</div>
<div class="a" style="left:0;top:21px;width:229px;height:34px;background:#474747;border-bottom:1px solid #3a3a3a"></div>
<svg class="a" style="left:6px;top:32.0px" width="15" height="12" viewBox="0 0 15 12"><path d="M1 6q6.500-7 13 0q-6.500 7-13 0z" fill="none" stroke="#cfcfcf" stroke-width="1.500"/><circle cx="7.500" cy="6" r="2.500" fill="#cfcfcf"/></svg>
<div class="a" style="left:75px;top:24.5px;width:31px;height:27px;border:1.5px solid #1a1a1a;background-color:#fff;background-image:linear-gradient(45deg,#d4d4d4 25%,transparent 25%,transparent 75%,#d4d4d4 75%),linear-gradient(45deg,#d4d4d4 25%,transparent 25%,transparent 75%,#d4d4d4 75%);background-size:8px 8px;background-position:0 0,4px 4px"></div>
<div class="t" style="left:115px;top:30.5px;width:82px;overflow:hidden;font-size:12px;letter-spacing:-.1px">&lt;Group&gt;</div>
<div class="a" style="left:0;top:55px;width:229px;height:34px;background:#474747;border-bottom:1px solid #3a3a3a"></div>
<svg class="a" style="left:6px;top:66.0px" width="15" height="12" viewBox="0 0 15 12"><path d="M1 6q6.500-7 13 0q-6.500 7-13 0z" fill="none" stroke="#cfcfcf" stroke-width="1.500"/><circle cx="7.500" cy="6" r="2.500" fill="#cfcfcf"/></svg>
<div class="a" style="left:75px;top:58.5px;width:31px;height:27px;border:1.5px solid #1a1a1a;background-color:#fff;background-image:linear-gradient(45deg,#d4d4d4 25%,transparent 25%,transparent 75%,#d4d4d4 75%),linear-gradient(45deg,#d4d4d4 25%,transparent 25%,transparent 75%,#d4d4d4 75%);background-size:8px 8px;background-position:0 0,4px 4px"></div>
<div class="t" style="left:115px;top:64.5px;width:82px;overflow:hidden;font-size:12px;letter-spacing:-.1px">&lt;Group&gt;</div>
<div class="a" style="left:0;top:89px;width:229px;height:34px;background:#474747;border-bottom:1px solid #3a3a3a"></div>
<svg class="a" style="left:6px;top:100.0px" width="15" height="12" viewBox="0 0 15 12"><path d="M1 6q6.500-7 13 0q-6.500 7-13 0z" fill="none" stroke="#cfcfcf" stroke-width="1.500"/><circle cx="7.500" cy="6" r="2.500" fill="#cfcfcf"/></svg>
<div class="a" style="left:75px;top:92.5px;width:31px;height:27px;border:1.5px solid #1a1a1a;background-color:#fff;background-image:linear-gradient(45deg,#d4d4d4 25%,transparent 25%,transparent 75%,#d4d4d4 75%),linear-gradient(45deg,#d4d4d4 25%,transparent 25%,transparent 75%,#d4d4d4 75%);background-size:8px 8px;background-position:0 0,4px 4px"></div>
<div class="t" style="left:115px;top:98.5px;width:82px;overflow:hidden;font-size:12px;letter-spacing:-.1px">&lt;Group&gt;</div>
<div class="a" style="left:0;top:123px;width:229px;height:34px;background:#474747;border-bottom:1px solid #3a3a3a"></div>
<svg class="a" style="left:6px;top:134.0px" width="15" height="12" viewBox="0 0 15 12"><path d="M1 6q6.500-7 13 0q-6.500 7-13 0z" fill="none" stroke="#cfcfcf" stroke-width="1.500"/><circle cx="7.500" cy="6" r="2.500" fill="#cfcfcf"/></svg>
<div class="a" style="left:75px;top:126.5px;width:31px;height:27px;border:1.5px solid #1a1a1a;background-color:#fff;background-image:linear-gradient(45deg,#d4d4d4 25%,transparent 25%,transparent 75%,#d4d4d4 75%),linear-gradient(45deg,#d4d4d4 25%,transparent 25%,transparent 75%,#d4d4d4 75%);background-size:8px 8px;background-position:0 0,4px 4px"></div>
<div class="t" style="left:115px;top:132.5px;width:82px;overflow:hidden;font-size:12px;letter-spacing:-.1px">&lt;Group&gt;</div>
<div class="a" style="left:0;top:157px;width:229px;height:34px;background:#474747;border-bottom:1px solid #3a3a3a"></div>
<svg class="a" style="left:6px;top:168.0px" width="15" height="12" viewBox="0 0 15 12"><path d="M1 6q6.500-7 13 0q-6.500 7-13 0z" fill="none" stroke="#cfcfcf" stroke-width="1.500"/><circle cx="7.500" cy="6" r="2.500" fill="#cfcfcf"/></svg>
<div class="a" style="left:75px;top:160.5px;width:31px;height:27px;border:1.5px solid #1a1a1a;background-color:#fff;background-image:linear-gradient(45deg,#d4d4d4 25%,transparent 25%,transparent 75%,#d4d4d4 75%),linear-gradient(45deg,#d4d4d4 25%,transparent 25%,transparent 75%,#d4d4d4 75%);background-size:8px 8px;background-position:0 0,4px 4px"></div>
<div class="t" style="left:115px;top:166.5px;width:82px;overflow:hidden;font-size:12px;letter-spacing:-.1px">&lt;Group&gt;</div>
<div class="a" style="left:0;top:191px;width:229px;height:34px;background:#474747;border-bottom:1px solid #3a3a3a"></div>
<svg class="a" style="left:6px;top:202.0px" width="15" height="12" viewBox="0 0 15 12"><path d="M1 6q6.500-7 13 0q-6.500 7-13 0z" fill="none" stroke="#cfcfcf" stroke-width="1.500"/><circle cx="7.500" cy="6" r="2.500" fill="#cfcfcf"/></svg>
<div class="a" style="left:75px;top:194.5px;width:31px;height:27px;border:1.5px solid #1a1a1a;background-color:#fff;background-image:linear-gradient(45deg,#d4d4d4 25%,transparent 25%,transparent 75%,#d4d4d4 75%),linear-gradient(45deg,#d4d4d4 25%,transparent 25%,transparent 75%,#d4d4d4 75%);background-size:8px 8px;background-position:0 0,4px 4px"></div>
<div class="t" style="left:115px;top:200.5px;width:82px;overflow:hidden;font-size:12px;letter-spacing:-.1px">&lt;Group&gt;</div>
<div class="a" style="left:0;top:225px;width:229px;height:34px;background:#474747;border-bottom:1px solid #3a3a3a"></div>
<svg class="a" style="left:6px;top:236.0px" width="15" height="12" viewBox="0 0 15 12"><path d="M1 6q6.500-7 13 0q-6.500 7-13 0z" fill="none" stroke="#cfcfcf" stroke-width="1.500"/><circle cx="7.500" cy="6" r="2.500" fill="#cfcfcf"/></svg>
<div class="a" style="left:43px;top:228.5px;width:31px;height:27px;border:1.5px solid #1a1a1a;background-color:#fff;background-image:linear-gradient(45deg,#d4d4d4 25%,transparent 25%,transparent 75%,#d4d4d4 75%),linear-gradient(45deg,#d4d4d4 25%,transparent 25%,transparent 75%,#d4d4d4 75%);background-size:8px 8px;background-position:0 0,4px 4px"></div>
<div class="t" style="left:83px;top:234.5px;width:114px;overflow:hidden;font-size:12px;letter-spacing:-.45px">FRONT BRIM UNDER</div>
<div class="a" style="left:0;top:259px;width:229px;height:34px;background:#474747;border-bottom:1px solid #3a3a3a"></div>
<svg class="a" style="left:6px;top:270.0px" width="15" height="12" viewBox="0 0 15 12"><path d="M1 6q6.500-7 13 0q-6.500 7-13 0z" fill="none" stroke="#cfcfcf" stroke-width="1.500"/><circle cx="7.500" cy="6" r="2.500" fill="#cfcfcf"/></svg>
<div class="a" style="left:43px;top:262.5px;width:31px;height:27px;border:1.5px solid #1a1a1a;background-color:#fff;background-image:linear-gradient(45deg,#d4d4d4 25%,transparent 25%,transparent 75%,#d4d4d4 75%),linear-gradient(45deg,#d4d4d4 25%,transparent 25%,transparent 75%,#d4d4d4 75%);background-size:8px 8px;background-position:0 0,4px 4px"></div>
<div class="t" style="left:83px;top:268.5px;width:114px;overflow:hidden;font-size:12px;letter-spacing:-.45px">FRONT PANEL STITCH</div>
<div class="a" style="left:0;top:293px;width:229px;height:34px;background:#474747;border-bottom:1px solid #3a3a3a"></div>
<svg class="a" style="left:6px;top:304.0px" width="15" height="12" viewBox="0 0 15 12"><path d="M1 6q6.500-7 13 0q-6.500 7-13 0z" fill="none" stroke="#cfcfcf" stroke-width="1.500"/><circle cx="7.500" cy="6" r="2.500" fill="#cfcfcf"/></svg>
<div class="a" style="left:43px;top:296.5px;width:31px;height:27px;border:1.5px solid #1a1a1a;background-color:#fff;background-image:linear-gradient(45deg,#d4d4d4 25%,transparent 25%,transparent 75%,#d4d4d4 75%),linear-gradient(45deg,#d4d4d4 25%,transparent 25%,transparent 75%,#d4d4d4 75%);background-size:8px 8px;background-position:0 0,4px 4px"></div>
<div class="t" style="left:83px;top:302.5px;width:114px;overflow:hidden;font-size:12px;letter-spacing:-.45px">FRONT PANEL STITCH</div>
<div class="a" style="left:0;top:327px;width:229px;height:34px;background:#474747;border-bottom:1px solid #3a3a3a"></div>
<svg class="a" style="left:6px;top:338.0px" width="15" height="12" viewBox="0 0 15 12"><path d="M1 6q6.500-7 13 0q-6.500 7-13 0z" fill="none" stroke="#cfcfcf" stroke-width="1.500"/><circle cx="7.500" cy="6" r="2.500" fill="#cfcfcf"/></svg>
<div class="a" style="left:43px;top:330.5px;width:31px;height:27px;border:1.5px solid #1a1a1a;background-color:#fff;background-image:linear-gradient(45deg,#d4d4d4 25%,transparent 25%,transparent 75%,#d4d4d4 75%),linear-gradient(45deg,#d4d4d4 25%,transparent 25%,transparent 75%,#d4d4d4 75%);background-size:8px 8px;background-position:0 0,4px 4px"></div>
<div class="t" style="left:83px;top:336.5px;width:114px;overflow:hidden;font-size:12px;letter-spacing:-.45px">FRONT BRIM</div>
<div class="a" style="left:0;top:361px;width:229px;height:34px;background:#5a5a5a;border-bottom:1px solid #3a3a3a"></div>
<svg class="a" style="left:6px;top:372.0px" width="15" height="12" viewBox="0 0 15 12"><path d="M1 6q6.500-7 13 0q-6.500 7-13 0z" fill="none" stroke="#cfcfcf" stroke-width="1.500"/><circle cx="7.500" cy="6" r="2.500" fill="#cfcfcf"/></svg>
<div class="a" style="left:43px;top:364.5px;width:31px;height:27px;border:1.5px dashed #111;background-color:#fff;background-image:linear-gradient(45deg,#d4d4d4 25%,transparent 25%,transparent 75%,#d4d4d4 75%),linear-gradient(45deg,#d4d4d4 25%,transparent 25%,transparent 75%,#d4d4d4 75%);background-size:8px 8px;background-position:0 0,4px 4px"></div>
<svg class="a" style="left:48px;top:367.5px" width="8" height="6" viewBox="0 0 8 6"><path d="M1 5q3-5 6 0" fill="none" stroke="#111" stroke-width="1.500"/></svg>
<div class="t" style="left:83px;top:370.5px;width:114px;overflow:hidden;font-size:12px;letter-spacing:-.45px">FRONT HAT PANEL</div>
<div class="a" style="left:0;top:395px;width:229px;height:25px;background:#474747;border-bottom:1px solid #3a3a3a"></div>
<svg class="a" style="left:6px;top:401.5px" width="15" height="12" viewBox="0 0 15 12"><path d="M1 6q6.500-7 13 0q-6.500 7-13 0z" fill="none" stroke="#cfcfcf" stroke-width="1.500"/><circle cx="7.500" cy="6" r="2.500" fill="#cfcfcf"/></svg>
<svg class="a" style="left:28px;top:401.5px" width="8" height="12" viewBox="0 0 8 12"><path d="M0 0v12L7 6z" fill="#d0d0d0"/></svg>
<svg class="a" style="left:42px;top:402.0px" width="14" height="11" viewBox="0 0 14 11"><path d="M0 1q0-1 1-1h4l1.500 1.500H13q1 0 1 1V10q0 1-1 1H1q-1 0-1-1z" fill="#d0d0d0"/></svg>
<div class="t" style="left:64px;top:400.0px;width:133px;overflow:hidden;font-size:12px;letter-spacing:-.45px">RIGHT SIDE VIEW TEMPL</div>
<div class="a" style="left:0;top:420px;width:229px;height:25px;background:#474747;border-bottom:1px solid #3a3a3a"></div>
<svg class="a" style="left:6px;top:426.5px" width="15" height="12" viewBox="0 0 15 12"><path d="M1 6q6.500-7 13 0q-6.500 7-13 0z" fill="none" stroke="#cfcfcf" stroke-width="1.500"/><circle cx="7.500" cy="6" r="2.500" fill="#cfcfcf"/></svg>
<svg class="a" style="left:28px;top:426.5px" width="8" height="12" viewBox="0 0 8 12"><path d="M0 0v12L7 6z" fill="#d0d0d0"/></svg>
<svg class="a" style="left:42px;top:427.0px" width="14" height="11" viewBox="0 0 14 11"><path d="M0 1q0-1 1-1h4l1.500 1.500H13q1 0 1 1V10q0 1-1 1H1q-1 0-1-1z" fill="#d0d0d0"/></svg>
<div class="t" style="left:64px;top:425.0px;width:133px;overflow:hidden;font-size:12px;letter-spacing:-.45px">LEFT SIDE VIEW TEMPLAT</div>
<div class="a" style="left:0;top:445px;width:229px;height:25px;background:#474747;border-bottom:1px solid #3a3a3a"></div>
<svg class="a" style="left:6px;top:451.5px" width="15" height="12" viewBox="0 0 15 12"><path d="M1 6q6.500-7 13 0q-6.500 7-13 0z" fill="none" stroke="#cfcfcf" stroke-width="1.500"/><circle cx="7.500" cy="6" r="2.500" fill="#cfcfcf"/></svg>
<svg class="a" style="left:26px;top:453.5px" width="12" height="8" viewBox="0 0 12 8"><path d="M0 0h12L6 7z" fill="#d0d0d0"/></svg>
<svg class="a" style="left:42px;top:452.0px" width="14" height="11" viewBox="0 0 14 11"><path d="M0 1q0-1 1-1h4l1.500 1.500H13q1 0 1 1V10q0 1-1 1H1q-1 0-1-1z" fill="#d0d0d0"/></svg>
<div class="t" style="left:64px;top:450.0px;width:133px;overflow:hidden;font-size:12px;letter-spacing:-.45px">UNDERNEATH HAT CENT</div>
<div class="a" style="left:0;top:470px;width:229px;height:25px;background:#474747;border-bottom:1px solid #3a3a3a"></div>
<svg class="a" style="left:6px;top:476.5px" width="15" height="12" viewBox="0 0 15 12"><path d="M1 6q6.500-7 13 0q-6.500 7-13 0z" fill="none" stroke="#cfcfcf" stroke-width="1.500"/><circle cx="7.500" cy="6" r="2.500" fill="#cfcfcf"/></svg>
<svg class="a" style="left:41px;top:478.5px" width="12" height="8" viewBox="0 0 12 8"><path d="M0 0h12L6 7z" fill="#d0d0d0"/></svg>
<svg class="a" style="left:57px;top:477.0px" width="14" height="11" viewBox="0 0 14 11"><path d="M0 1q0-1 1-1h4l1.500 1.500H13q1 0 1 1V10q0 1-1 1H1q-1 0-1-1z" fill="#d0d0d0"/></svg>
<div class="t" style="left:80px;top:475.0px;width:117px;overflow:hidden;font-size:12px;letter-spacing:-.45px">UNDERNEATH STITCH</div>
<div class="a" style="left:0;top:495px;width:229px;height:34px;background:#474747;border-bottom:1px solid #3a3a3a"></div>
<svg class="a" style="left:6px;top:506.0px" width="15" height="12" viewBox="0 0 15 12"><path d="M1 6q6.500-7 13 0q-6.500 7-13 0z" fill="none" stroke="#cfcfcf" stroke-width="1.500"/><circle cx="7.500" cy="6" r="2.500" fill="#cfcfcf"/></svg>
<div class="a" style="left:60px;top:498.5px;width:31px;height:27px;border:1.5px solid #1a1a1a;background-color:#fff;background-image:linear-gradient(45deg,#d4d4d4 25%,transparent 25%,transparent 75%,#d4d4d4 75%),linear-gradient(45deg,#d4d4d4 25%,transparent 25%,transparent 75%,#d4d4d4 75%);background-size:8px 8px;background-position:0 0,4px 4px"></div>
<div class="t" style="left:99px;top:504.5px;width:98px;overflow:hidden;font-size:12px;letter-spacing:-.1px">&lt;Group&gt;</div>
<div class="a" style="left:0;top:529px;width:229px;height:34px;background:#474747;border-bottom:1px solid #3a3a3a"></div>
<svg class="a" style="left:6px;top:540.0px" width="15" height="12" viewBox="0 0 15 12"><path d="M1 6q6.500-7 13 0q-6.500 7-13 0z" fill="none" stroke="#cfcfcf" stroke-width="1.500"/><circle cx="7.500" cy="6" r="2.500" fill="#cfcfcf"/></svg>
<div class="a" style="left:60px;top:532.5px;width:31px;height:27px;border:1.5px solid #1a1a1a;background-color:#fff;background-image:linear-gradient(45deg,#d4d4d4 25%,transparent 25%,transparent 75%,#d4d4d4 75%),linear-gradient(45deg,#d4d4d4 25%,transparent 25%,transparent 75%,#d4d4d4 75%);background-size:8px 8px;background-position:0 0,4px 4px"></div>
</div>
<div class="a" style="left:1416px;top:357px;width:10px;height:540px;background:#3a3a3a"></div>
<div class="a" style="left:1187px;top:897px;width:239px;height:1px;background:#333"></div>
<div class="a" style="left:1418px;top:475px;width:6px;height:130px;background:#232323;border-radius:3px"></div>
<svg class="a" style="left:1265px;top:902px" width="160" height="18" viewBox="1265 902 160 18">
<g fill="#d0d0d0" stroke="#d0d0d0">
<path d="M1270 911h12" stroke-width="1.500"/><rect x="1269.500" y="908.500" width="5" height="5" rx="2" fill="none" stroke-width="1.500"/><rect x="1277.500" y="908.500" width="5" height="5" rx="2" fill="none" stroke-width="1.500"/>
</g>
<text x="1290" y="916" font-family="Liberation Sans" font-size="13" fill="#d0d0d0" letter-spacing="-1">eff</text>
<rect x="1314" y="905" width="14" height="11" fill="#d0d0d0"/><circle cx="1321" cy="910.500" r="3.500" fill="#474747"/>
<circle cx="1343" cy="911" r="6.500" fill="none" stroke="#d0d0d0" stroke-width="1.500"/><path d="M1343 904.500a6.500 6.500 0 0 1 0 13z" fill="#d0d0d0"/>
<path d="M1358 906q0-1 1-1h4l1.500 1.500H1371q1 0 1 1V916q0 1-1 1h-12q-1 0-1-1z" fill="#d0d0d0"/>
<path d="M1381.500 905h12.500v12.500h-8.500l-4-4z" fill="none" stroke="#d0d0d0" stroke-width="1.300"/><path d="M1381.500 913.500h4v4" fill="none" stroke="#d0d0d0" stroke-width="1.100"/>
<path d="M1403.500 906.500h13l-2 11q-.300 1-1.300 1h-6.400q-1 0-1.300-1z" fill="#d0d0d0"/><ellipse cx="1410" cy="906.500" rx="6.500" ry="1.800" fill="#474747" stroke="#d0d0d0" stroke-width="1.200"/>
</svg>
<!-- /right panel -->
</body></html>
